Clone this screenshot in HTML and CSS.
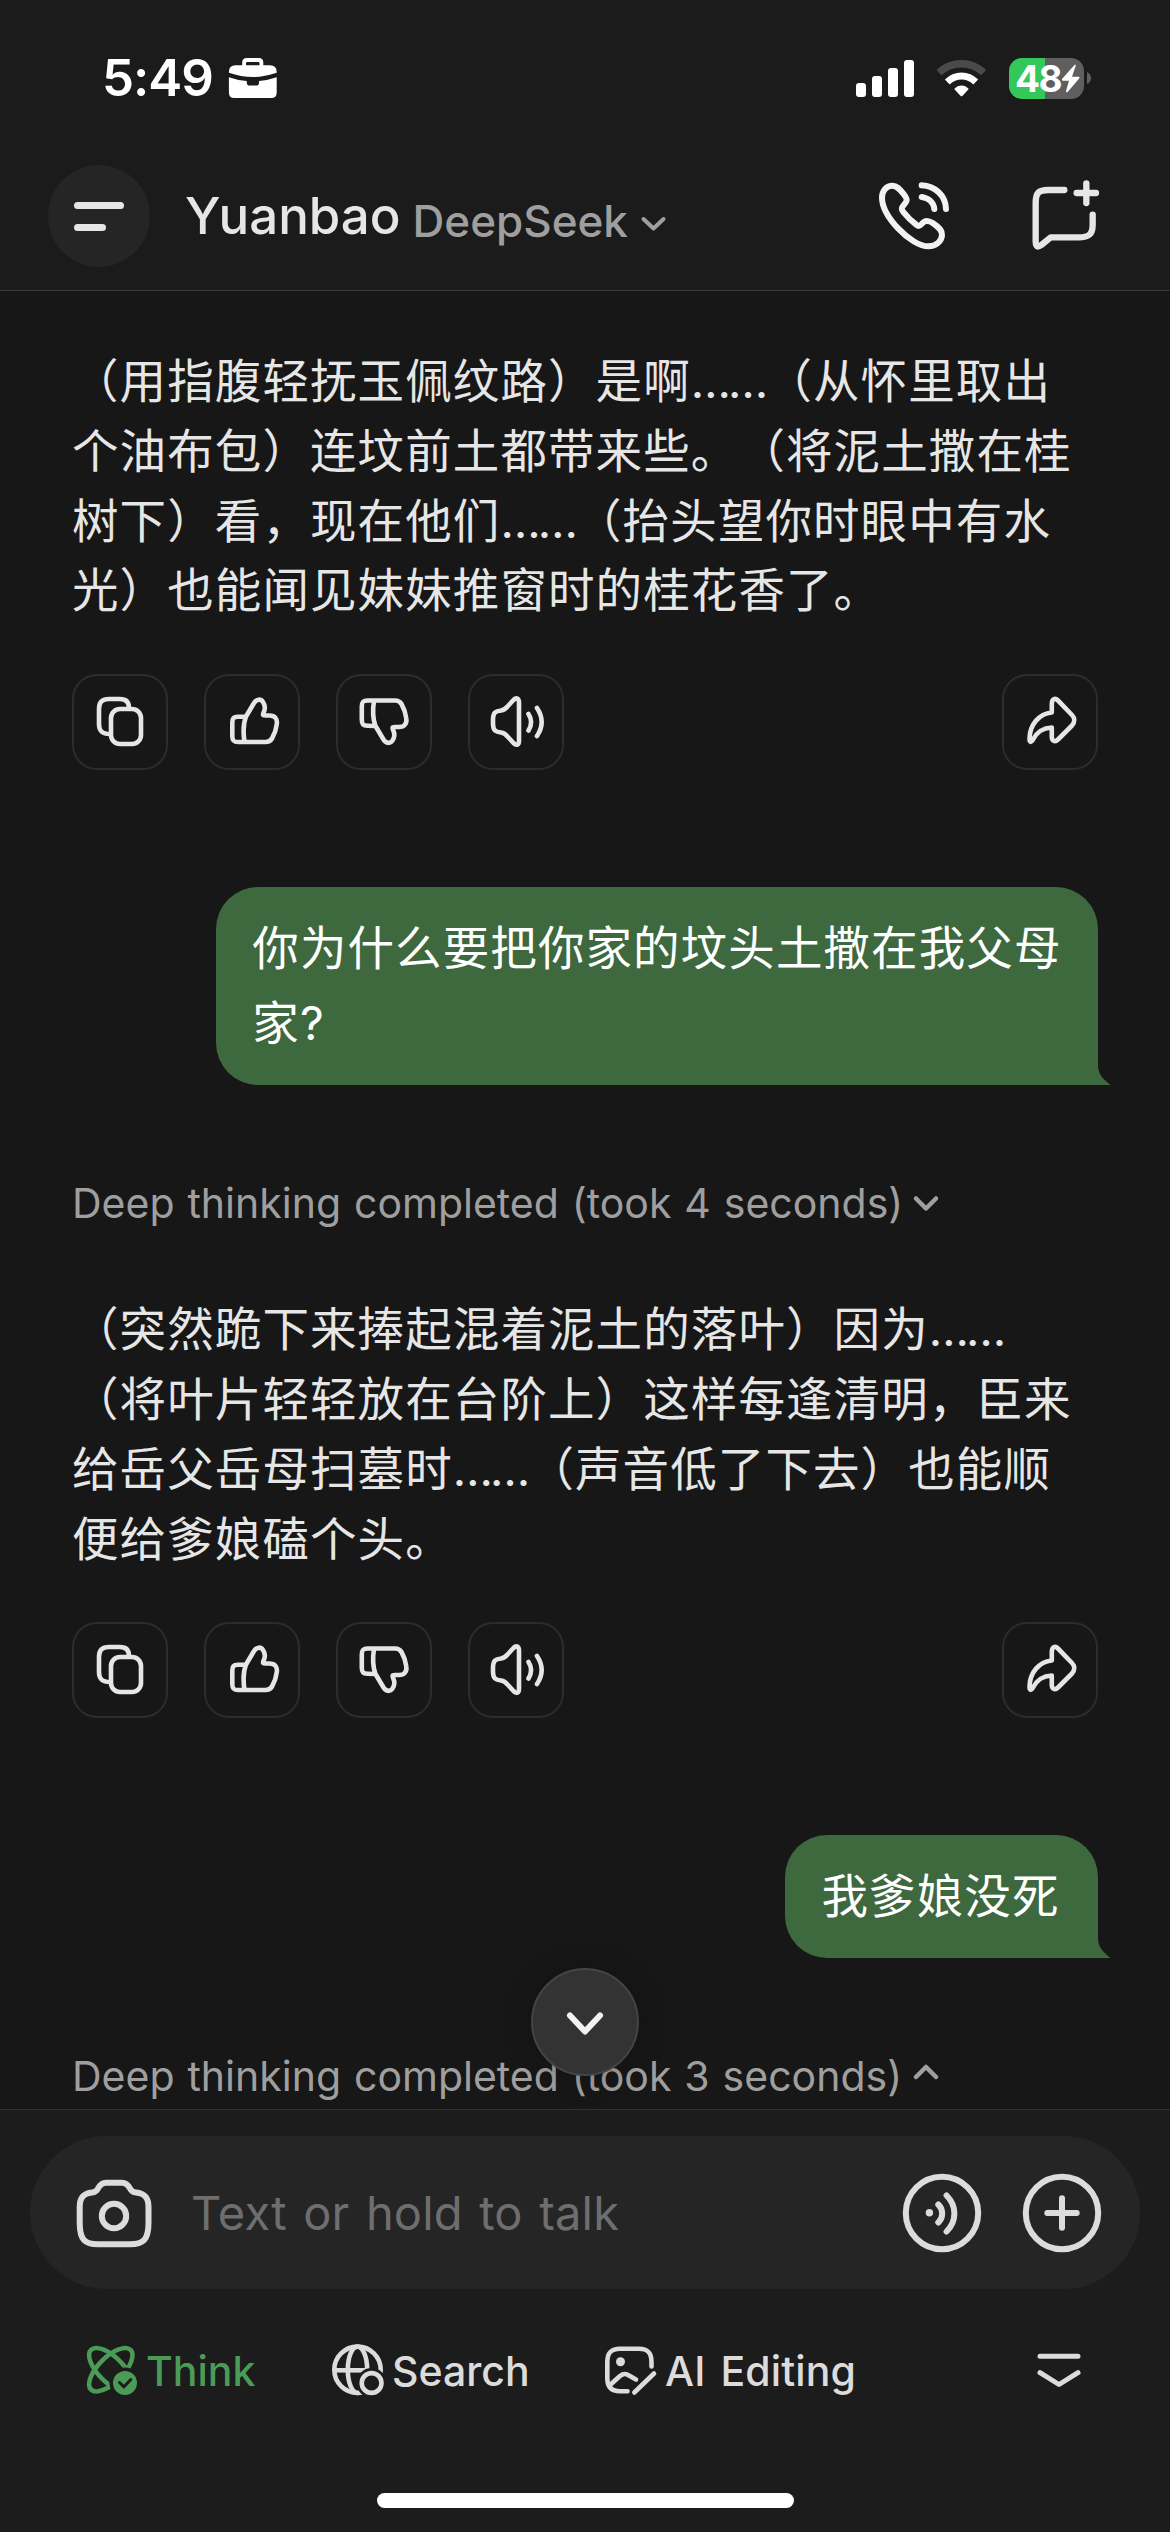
FILE: index.html
```html
<!DOCTYPE html>
<html lang="zh-CN">
<head>
<meta charset="utf-8">
<title>Yuanbao</title>
<link rel="stylesheet" href="styles.css">
</head>
<body>
<svg class="sprite" aria-hidden="true">
  <symbol id="copy" viewBox="0 0 96 96"><rect x="39" y="35" width="30" height="35" rx="9"/><path d="M57 34C57 28 54 25 48 25H37C30 25 27 28 27 35V50C27 57 30 60 38 60"/></symbol>
  <symbol id="like" viewBox="0 0 96 96"><path d="M42 42.5L50 29C52.5 25 56.5 24.5 59 28C61 31 61.5 34 60 37.5C58.5 41 58.5 41.5 61.5 41.5H65.5C71 41.5 73.5 45 72.8 50C72 57 70 61 68 64.5C66.5 67 65 68 61.5 68H34C29.5 68 28.3 66.5 28.3 62V49C28.3 44 29.5 43 34 42.8ZM42 42.5C39 50 39 58 40.5 68"/></symbol>
  <symbol id="dislike" viewBox="0 0 96 96"><path transform="matrix(1 0 0 -1 -2.5 94.5)" d="M42 42.5L50 29C52.5 25 56.5 24.5 59 28C61 31 61.5 34 60 37.5C58.5 41 58.5 41.5 61.5 41.5H65.5C71 41.5 73.5 45 72.8 50C72 57 70 61 68 64.5C66.5 67 65 68 61.5 68H34C29.5 68 28.3 66.5 28.3 62V49C28.3 44 29.5 43 34 42.8ZM42 42.5C39 50 39 58 40.5 68"/></symbol>
  <symbol id="speaker" viewBox="0 0 96 96"><path d="M25 46C25 38 28 37 33 36.5C36 36 37.5 35 39.5 32.5L45.5 26C48.5 23 51 24.5 51 28.5V67C51 71 48.5 72 45.5 69L39.5 62.5C37.5 60 36 59 33 58.5C28 58 25 57 25 49.5ZM60.5 40C63.8 45 63.8 51 60.5 56.5M69 34C75 43 75 53 69 62"/></symbol>
  <symbol id="share" viewBox="0 0 96 96"><path d="M49.8 38.5V30C49.8 25 53 23.5 56 26.5L70 41C73 44 73 48 70 51.5L56 65.5C53 68.5 49.8 67 49.8 63V53.5C40 54 35 58 31 65.5C29 69 27.5 68.5 27.5 64.5C28 50 37 40 49.8 38.5Z"/></symbol>
</svg>

<header class="top">
  <div class="status">
    <span class="time">5:49</span>
    <svg class="briefcase" width="50" height="42" viewBox="0 0 50 42"><path fill="#fff" fill-rule="evenodd" d="M14.2 8.3V5.5Q14.2 1 18.7 1H30.8Q35.3 1 35.3 5.5V8.3H42Q48.7 8.3 48.7 15V15.7C40 18.5 33 20 25 20S9 18.5 .9 15.7V15Q.9 8.3 7.6 8.3ZM18 8.3H31.5V6.3Q31.5 5 30.2 5H19.3Q18 5 18 6.3ZM.9 20.3Q9 23.3 18.8 24V25.7Q18.8 28.5 21.6 28.5H28.2Q31 28.5 31 25.7V24Q40 23.3 48.7 20.3V35.5Q48.7 41 43.2 41H6.4Q.9 41 .9 35.5Z"/></svg>
    <svg class="signal" width="58" height="37" viewBox="0 0 58 37" fill="#fff"><rect y="23" width="10" height="14" rx="3"/><rect x="16" y="16" width="10" height="21" rx="3"/><rect x="32" y="8" width="10" height="29" rx="3"/><rect x="48" width="10" height="37" rx="3"/></svg>
    <svg class="wifi" width="53" height="40" viewBox="465 172 160 120" fill="none"><path stroke="#4a4a4a" stroke-width="22" d="M477 216C515 180 574 180 612 216"/><path stroke="#fff" stroke-width="21" d="M502 244C527 220 563 220 588 244"/><path fill="#fff" d="M523 265C536 251 554 251 567 265L549 285Q545 290 541 285Z"/></svg>
    <div class="battery"><span>48</span><svg width="20" height="29" viewBox="842 192 60 87"><path fill="#fff" d="M883 194L845 237Q843 242 848 242H866L857 273Q857 279 862 276L897 235Q900 230 895 230H875L886 198Q887 192 883 194Z"/></svg></div>
    <svg class="cap" width="4" height="12" viewBox="0 0 4 12"><path fill="#5f5f5f" d="M0 0Q4 2 4 6T0 12Z"/></svg>
  </div>
  <div class="nav">
    <div class="menu"><i></i><i></i></div>
    <span class="title">Yuanbao</span>
    <span class="model">DeepSeek</span>
    <svg class="model-arrow" width="30" height="20" viewBox="0 0 30 20"><path d="M4.500 5L14.500 14.500L24.500 5" fill="none" stroke="#9f9f9f" stroke-width="4" stroke-linecap="round" stroke-linejoin="round"/></svg>
    <svg class="phone" width="76" height="74" viewBox="288 541 228 222"><g fill="none" stroke="#f2f2f2" stroke-width="18" stroke-linecap="round" stroke-linejoin="round"><path d="M338 561C350 561 358 570 370 585C384 603 382 606 372 618C363 628 364 632 370 640C384 658 395 668 410 679C416 684 420 682 426 675C434 665 444 664 458 673C480 688 487 697 486 710C485 728 468 742 445 743C420 743 385 722 355 690C325 658 306 625 306 597C306 575 320 561 338 561Z"/><path d="M425 560C465 562 497 590 498 631M425 595C446 598 461 612 463 631"/></g></svg>
    <svg class="newchat" width="76" height="74" viewBox="744 538 228 222"><path fill="none" stroke="#e6e6e6" stroke-width="19" stroke-linecap="round" stroke-linejoin="round" d="M853 571H805C775 571 767 580 767 610V725C767 742 773 744 784 736L812 713H895C928 713 938 703 938 675V645M919 551V610M890 580H948"/></svg>
  </div>
</header>

<main class="chat">
  <p class="reply">（用指腹轻抚玉佩纹路）是啊<span class="dots">……</span>（从怀里取出<br>个油布包）连坟前土都带来些。（将泥土撒在桂<br>树下）看，现在他们<span class="dots">……</span>（抬头望你时眼中有水<br>光）也能闻见妹妹推窗时的桂花香了。</p>
  <div class="actions">
    <button><svg><use href="#copy"/></svg></button><button><svg><use href="#like"/></svg></button><button><svg><use href="#dislike"/></svg></button><button><svg><use href="#speaker"/></svg></button><button class="share"><svg><use href="#share"/></svg></button>
  </div>
  <div class="bubble">你为什么要把你家的坟头土撒在我父母<br>家?<svg class="tail" width="14" height="20" viewBox="0 0 14 20"><path fill="#3e683e" d="M0 0H1C1 9 6 14 13.500 20H0Z"/></svg></div>
  <div class="thinking"><span>Deep thinking completed (took 4 seconds)</span><svg width="28" height="20" viewBox="0 0 28 20"><path d="M4 5.500L14 15.500L24 5.500"/></svg></div>
  <p class="reply">（突然跪下来捧起混着泥土的落叶）因为<span class="dots">……</span><br>（将叶片轻轻放在台阶上）这样每逢清明，臣来<br>给岳父岳母扫墓时<span class="dots">……</span>（声音低了下去）也能顺<br>便给爹娘磕个头。</p>
  <div class="actions">
    <button><svg><use href="#copy"/></svg></button><button><svg><use href="#like"/></svg></button><button><svg><use href="#dislike"/></svg></button><button><svg><use href="#speaker"/></svg></button><button class="share"><svg><use href="#share"/></svg></button>
  </div>
  <div class="bubble short">我爹娘没死<svg class="tail" width="14" height="20" viewBox="0 0 14 20"><path fill="#3e683e" d="M0 0H1C1 9 6 14 13.500 20H0Z"/></svg></div>
  <div class="thinking"><span>Deep thinking completed (took 3 seconds)</span><svg width="28" height="24" viewBox="0 0 28 24"><path d="M4 13L14 3L24 13"/></svg></div>
  <div class="to-bottom"><svg width="44" height="30" viewBox="0 0 44 30"><path d="M7 8.500L22 24.500L37 8.500" fill="none" stroke="#f2f2f2" stroke-width="6" stroke-linecap="round" stroke-linejoin="round"/></svg></div>
</main>

<footer class="composer">
  <div class="input">
    <svg class="camera" width="88" height="80" viewBox="0 0 88 80"><path d="M36 9.800H52C56 9.800 58 12 60 15.500C61.500 18.500 63 19.300 66 19.600C75 20.500 78.500 25 78.500 34V50C78.500 67 73 71.300 60 71.300H28C15 71.300 9.700 67 9.700 50V34C9.700 25 13 20.500 22 19.600C25 19.300 26.500 18.500 28 15.500C30 12 32 9.800 36 9.800Z"/><circle cx="44" cy="43" r="12.200"/></svg>
    <span class="placeholder">Text or hold to talk</span>
    <svg class="voice" width="84" height="84" viewBox="0 0 84 84"><circle cx="42" cy="42" r="36.200"/><circle cx="29.400" cy="41.700" r="3.700" fill="#dcdcdc" stroke="none"/><path d="M38.300 33.500C43.500 38.500 43.500 46.500 38.300 51.500M46.600 24.500C57 35 57 50 46.600 60.500"/></svg>
    <svg class="plus" width="84" height="84" viewBox="0 0 84 84"><circle cx="42" cy="42" r="36.200"/><path d="M42 27.300V56.700M27.300 42H56.700"/></svg>
  </div>
  <div class="tools">
    <div class="tool think">
      <svg width="56" height="56" viewBox="0 0 56 56"><defs><mask id="m1"><rect width="56" height="56" fill="#fff"/><circle cx="41" cy="41" r="15.500" fill="#000"/></mask></defs><g mask="url(#m1)" fill="none" stroke="#4a9b57" stroke-width="4.600"><ellipse cx="26.800" cy="27.700" rx="28" ry="12.500" transform="rotate(45 26.800 27.700)"/><ellipse cx="26.800" cy="27.700" rx="28" ry="12.500" transform="rotate(-45 26.800 27.700)"/></g><circle cx="41" cy="41" r="12" fill="#4a9b57"/><path d="M35.500 40.500L40 44.800L46.800 37.500" fill="none" stroke="#1c1c1c" stroke-width="3" stroke-linecap="round" stroke-linejoin="round"/></svg>
      <span>Think</span>
    </div>
    <div class="tool search">
      <svg width="56" height="56" viewBox="0 0 56 56"><defs><mask id="m2"><rect width="56" height="56" fill="#fff"/><circle cx="41.600" cy="41" r="15" fill="#000"/></mask></defs><g fill="none" stroke="#dcdcdc" stroke-width="4.600"><g mask="url(#m2)"><circle cx="27.500" cy="27.800" r="23.200"/><ellipse cx="27.500" cy="27.800" rx="9.700" ry="23.200"/><path d="M4.300 28.300H36"/></g><circle cx="41.600" cy="41" r="9.900"/></g></svg>
      <span>Search</span>
    </div>
    <div class="tool edit">
      <svg width="56" height="56" viewBox="0 0 56 56"><path fill="none" stroke="#dcdcdc" stroke-width="4.600" stroke-linecap="round" stroke-linejoin="round" d="M48.500 24.500V20C48.500 10 44 6.700 36 6.700H17C8 6.700 4.300 11 4.300 20V36C4.300 45 9 49.300 17 49.300H24.500M6.500 43.500L17 34C20.500 31.300 22.500 31.300 26 33.500L33 37.500M31.300 50.500L51 31.500"/><circle cx="17.500" cy="19.700" r="4.500" fill="#dcdcdc"/></svg>
      <span>AI Editing</span>
    </div>
    <svg class="collapse" width="46" height="40" viewBox="0 0 46 40"><path d="M4 6.300H42M4 22.700L23 34.500L42 22.700" fill="none" stroke="#dcdcdc" stroke-width="5" stroke-linecap="round" stroke-linejoin="round"/></svg>
  </div>
  <div class="home"></div>
</footer>
</body>
</html>
```
FILE: styles.css
```css
* { box-sizing: border-box; }

body {
  margin: 0;
  width: 1170px;
  height: 2532px;
  display: flex;
  flex-direction: column;
  overflow: hidden;
  background: #171717;
  color: #e6e6e6;
  font-family: Inter, "Noto Sans CJK SC", sans-serif;
}

svg { display: block; flex: none; }
.sprite { position: absolute; width: 0; height: 0; }

/* Header */
.top {
  height: 291px;
  flex: none;
  background: #1b1b1b;
  border-bottom: 1px solid #3c3c3c;
}

.status {
  height: 156px;
  padding: 0 79px 0 102px;
  display: flex;
  align-items: center;
}
.time { font-size: 51px; font-weight: 600; letter-spacing: -1px; line-height: 60px; color: #fff; width: 126px; white-space: nowrap; }
.signal { margin-left: auto; }
.wifi { margin: 0 21px; }
.battery {
  width: 75px;
  height: 41px;
  border-radius: 13px;
  background: linear-gradient(90deg, #34c759 36px, #5f5f5f 36px);
  color: #fff;
  font-size: 37px;
  font-weight: 700;
  line-height: 41px;
  padding-left: 6px;
  display: flex;
  align-items: center;
}
.battery span { width: 46px; letter-spacing: -1.500px; }
.cap { margin-left: 3px; }

.nav {
  height: 120px;
  padding: 0 66px 0 48px;
  display: flex;
  align-items: center;
}
.menu {
  width: 102px;
  height: 102px;
  border-radius: 50%;
  background: #252525;
  padding-left: 26px;
  display: flex;
  flex-direction: column;
  justify-content: center;
  gap: 15px;
}
.menu i { width: 50px; height: 7px; border-radius: 4px; background: #e6e6e6; }
.menu i + i { width: 32px; }
.title { margin-left: 35px; font-size: 51px; font-weight: 500; line-height: 62px; }
.model { margin-left: 12px; padding-top: 9px; font-size: 44px; font-weight: 500; line-height: 54px; color: #9f9f9f; }
.model-arrow { margin: 16px 0 0 11px; }
.phone { margin-left: auto; }
.newchat { margin-left: 76px; }

/* Conversation */
.chat {
  position: relative;
  flex: 1;
  min-height: 0;
  padding: 56px 72px 0;
  display: flex;
  flex-direction: column;
}
.chat > * { flex: none; }
.reply, .bubble {
  margin: 0;
  font-size: 46.500px;
  letter-spacing: 1.100px;
  white-space: nowrap;
  text-spacing-trim: space-all;
}
.reply { line-height: 69.800px; }
.dots { letter-spacing: -2.900px; }

.actions {
  height: 96px;
  margin-top: 48px;
  display: flex;
  gap: 36px;
}
.actions button {
  width: 96px;
  height: 96px;
  padding: 0;
  border: 2px solid #2c2c2c;
  border-radius: 25px;
  background: none;
}
.actions svg {
  width: 96px;
  height: 96px;
  margin: -2px;
  fill: none;
  stroke: #e6e6e6;
  stroke-width: 4.600;
  stroke-linecap: round;
  stroke-linejoin: round;
}
.actions .share { margin-left: auto; }

.bubble {
  position: relative;
  align-self: flex-end;
  margin-top: 117px;
  padding: 24px 36.500px;
  border-radius: 42px 42px 0 42px;
  background: #3e683e;
  color: #fff;
  line-height: 75px;
}
.short { min-width: 313px; }
.tail { position: absolute; right: -13px; bottom: 0; }

.thinking {
  height: 60px;
  margin: 88px 0 62px;
  display: flex;
  align-items: center;
  gap: 9px;
  color: #9f9f9f;
  font-size: 41px;
  word-spacing: 1.400px;
  white-space: nowrap;
}
.thinking span { width: 831px; }
.thinking svg { fill: none; stroke: #9f9f9f; stroke-width: 4.500; stroke-linecap: round; stroke-linejoin: round; }

.to-bottom {
  position: absolute;
  left: 531px;
  top: 1677px;
  width: 108px;
  height: 108px;
  border-radius: 50%;
  border: 2px solid #444;
  background: #333;
  box-shadow: 0 0 30px rgba(0, 0, 0, .25);
  display: grid;
  place-items: center;
}

/* Composer */
.composer {
  position: relative;
  height: 423px;
  flex: none;
  padding: 26px 30px 0;
  background: #1c1c1c;
  border-top: 1px solid #303030;
}
.input {
  height: 153px;
  padding: 0 36px 0 40px;
  border-radius: 77px;
  background: #252525;
  display: flex;
  align-items: center;
}
.input svg { fill: none; stroke: #dcdcdc; stroke-width: 6; stroke-linecap: round; stroke-linejoin: round; }
.placeholder { margin-left: 33px; font-size: 47px; letter-spacing: .200px; word-spacing: 3px; color: #6e6e6e; white-space: nowrap; }
.voice { margin-left: auto; }
.plus { margin-left: 36px; }

.tools {
  height: 56px;
  margin-top: 53px;
  padding: 0 58px 0 54px;
  display: flex;
  align-items: center;
  color: #dcdcdc;
  font-size: 41px;
  font-weight: 500;
}
.tool { display: flex; align-items: center; gap: 6px; white-space: nowrap; }
.tool span { padding-top: 1px; }
.think { width: 246px; color: #4a9b57; }
.search { width: 273px; }
.edit { word-spacing: 4px; letter-spacing: .100px; }
.collapse { margin-left: auto; }

.home {
  width: 417px;
  height: 15px;
  margin: 95px auto 0;
  border-radius: 8px;
  background: #fff;
}
```
